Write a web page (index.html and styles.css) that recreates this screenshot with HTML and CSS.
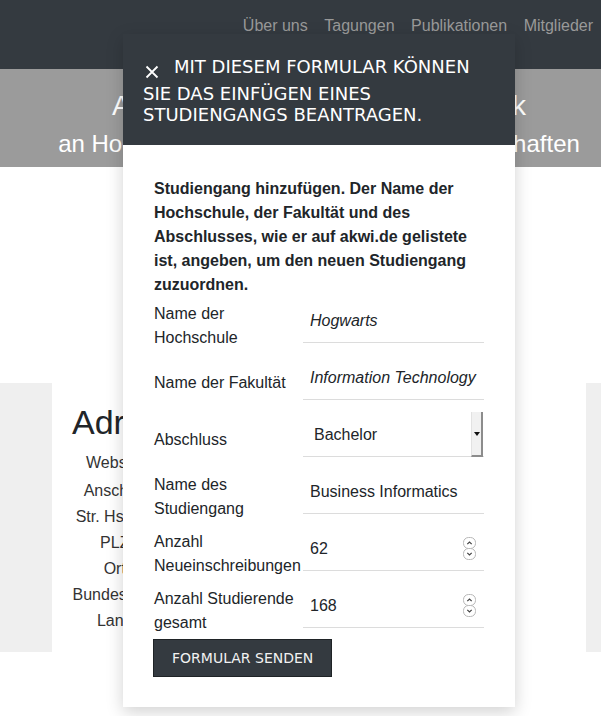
FILE: index.html
```html
<!DOCTYPE html>
<html lang="de">
<head>
<meta charset="utf-8">
<title>AKWI – Studiengang hinzufügen</title>
<link rel="stylesheet" href="styles.css">
</head>
<body>
<header class="navbar">
  <nav class="nav">
    <a href="#">Über uns</a>
    <a href="#">Tagungen</a>
    <a href="#">Publikationen</a>
    <a href="#">Mitglieder</a>
  </nav>
</header>
<section class="hero">
  <h1 class="hero-title">Arbeitskreis Wirtschaftsinformatik</h1>
  <p class="hero-sub">an Hochschulen für Angewandte Wissenschaften</p>
</section>
<div class="spacer"></div>
<section class="address-band">
  <div class="address-card">
    <h2 class="address-title">Adresse</h2>
    <dl class="address-list">
      <dt class="first">Website:</dt><dd class="first"></dd>
      <dt>Anschrift:</dt><dd></dd>
      <dt>Str. Hs.-Nr.:</dt><dd></dd>
      <dt>PLZ:</dt><dd></dd>
      <dt>Ort:</dt><dd></dd>
      <dt>Bundesland:</dt><dd></dd>
      <dt>Land:</dt><dd></dd>
    </dl>
  </div>
</section>

<div class="modal" role="dialog">
  <div class="modal-header">
    <h3 class="modal-title"><button class="close" type="button" aria-label="Schließen"><svg viewBox="0 0 14 14" width="14" height="14"><path d="M1.5 1.5 L12.5 12.5 M12.5 1.5 L1.5 12.5" stroke="#fff" stroke-width="1.8" fill="none"/></svg></button>Mit diesem Formular können Sie das Einfügen eines Studiengangs beantragen.</h3>
  </div>
  <div class="modal-body">
    <p class="intro">Studiengang hinzufügen. Der Name der Hochschule, der Fakultät und des Abschlusses, wie er auf akwi.de gelistete ist, angeben, um den neuen Studiengang zuzuordnen.</p>
    <form class="form-grid">
      <label for="hs">Name der Hochschule</label>
      <div class="field"><input id="hs" class="italic" type="text" value="Hogwarts"></div>

      <label for="fk">Name der Fakultät</label>
      <div class="field"><input id="fk" class="italic" type="text" value="Information Technology"></div>

      <label for="ab">Abschluss</label>
      <div class="field select-field">
        <select id="ab"><option>Bachelor</option><option>Master</option></select>
        <span class="select-btn"></span>
      </div>

      <label for="sg">Name des Studiengang</label>
      <div class="field"><input id="sg" type="text" value="Business Informatics"></div>

      <label for="ne">Anzahl Neueinschreibungen</label>
      <div class="field"><input id="ne" type="number" value="62">
        <svg class="spin" viewBox="0 0 15 23" width="15" height="23"><rect x="1.5" y="0.5" width="12" height="11" rx="5" fill="#fff" stroke="#b8b8b8"/><rect x="1.5" y="11.5" width="12" height="11" rx="5" fill="#fff" stroke="#b8b8b8"/><path d="M5.3 7.2 L7.5 5 L9.7 7.2" fill="none" stroke="#444" stroke-width="1.2"/><path d="M5.3 15.8 L7.5 18 L9.7 15.8" fill="none" stroke="#444" stroke-width="1.2"/></svg>
      </div>

      <label for="sd">Anzahl Studierende gesamt</label>
      <div class="field"><input id="sd" type="number" value="168">
        <svg class="spin" viewBox="0 0 15 23" width="15" height="23"><rect x="1.5" y="0.5" width="12" height="11" rx="5" fill="#fff" stroke="#b8b8b8"/><rect x="1.5" y="11.5" width="12" height="11" rx="5" fill="#fff" stroke="#b8b8b8"/><path d="M5.3 7.2 L7.5 5 L9.7 7.2" fill="none" stroke="#444" stroke-width="1.2"/><path d="M5.3 15.8 L7.5 18 L9.7 15.8" fill="none" stroke="#444" stroke-width="1.2"/></svg>
      </div>
    </form>
    <button class="submit" type="submit">Formular senden</button>
  </div>
</div>
</body>
</html>
```
FILE: styles.css
```css
* { box-sizing: border-box; }
html, body { margin: 0; padding: 0; }
body {
  font-family: "Liberation Sans", Arial, sans-serif;
  color: #212529;
  background: #fff;
  width: 601px;
  height: 716px;
  overflow: hidden;
  position: relative;
}

/* top navigation */
.navbar {
  background: #343a40;
  height: 69px;
  display: flex;
  justify-content: flex-end;
}
.nav { display: flex; padding-top: 14px; }
.nav a {
  color: #999;
  text-decoration: none;
  font-size: 16px;
  line-height: 24px;
  padding: 0 8px 0 8.5px;
}

/* hero band */
.hero {
  background: #9b9b9b;
  height: 98px;
  padding: 19px 0 0 37px;
  text-align: center;
  color: #fff;
}
.hero-title { margin: 0; font-size: 28px; line-height: 36px; font-weight: normal; }
.hero-sub { margin: 5px 0 0; font-size: 24px; line-height: 30px; }

.spacer { height: 216px; }

/* address section */
.address-band {
  background: #efefef;
  height: 269px;
  padding: 0 15px 0 52px;
  display: flex;
}
.address-card { background: #fff; flex: 1; padding: 19px 20px; }
.address-title {
  margin: 0 0 8px;
  font-size: 34px;
  line-height: 40px;
  font-weight: normal;
  color: #212529;
}
.address-list {
  display: grid;
  grid-template-columns: 90px 1fr;
  margin: 0;
  font-size: 16px;
  line-height: 26px;
  color: #333;
}
.address-list dt { text-align: center; }
.address-list dd { margin: 0; }
.address-list .first { padding-bottom: 2px; }

/* modal */
.modal {
  position: absolute;
  left: 123px;
  top: 34px;
  width: 392px;
  background: #fff;
  box-shadow: 0 5px 16px rgba(0, 0, 0, 0.18);
}
.modal-header {
  background: #343a40;
  color: #fff;
  padding: 22px 20px 20px;
}
.modal-title {
  margin: 0;
  font-family: "DejaVu Sans", sans-serif;
  font-size: 18px;
  line-height: 21px;
  font-weight: normal;
  text-transform: uppercase;
}
.close {
  display: inline-block;
  vertical-align: top;
  width: 15px;
  height: 27px;
  padding: 5px 0 0;
  margin: 0 14px 0 2px;
  border: 0;
  background: none;
  cursor: pointer;
}
.close svg { display: block; }

.modal-body { padding: 32px 31px 30px; }
.intro {
  margin: 0 0 2px;
  font-weight: bold;
  font-size: 16px;
  line-height: 24px;
  color: #212529;
}
.form-grid {
  display: grid;
  grid-template-columns: 149px 181px;
  grid-auto-rows: 52px;
  row-gap: 5px;
}
.form-grid label {
  align-self: center;
  padding-top: 2px;
  font-size: 16px;
  line-height: 24px;
  color: #212529;
}
.field { align-self: start; height: 44px; position: relative; }
.field input,
.field select {
  display: block;
  width: 100%;
  height: 44px;
  margin: 0;
  border: 0;
  border-bottom: 1px solid #dcdcdc;
  border-radius: 0;
  padding: 0 7px;
  font-family: "Liberation Sans", Arial, sans-serif;
  font-size: 16px;
  color: #212529;
  background: transparent;
  outline: none;
}
.field .italic { font-style: italic; }
.select-field select {
  -webkit-appearance: none;
  appearance: none;
  padding-left: 11px;
}
.select-btn {
  position: absolute;
  right: 1px;
  top: -1px;
  bottom: 0;
  width: 12px;
  background: #f1f1f1;
  border-left: 1px solid #e2e2e2;
  border-right: 2px solid #8c8c8c;
  border-bottom: 2px solid #8c8c8c;
  display: flex;
  align-items: center;
  justify-content: center;
  pointer-events: none;
}
.select-btn::after {
  content: "";
  border-left: 3px solid transparent;
  border-right: 3px solid transparent;
  border-top: 4px solid #111;
}
.field input[type=number] { -moz-appearance: textfield; appearance: textfield; }
.field input[type=number]::-webkit-inner-spin-button,
.field input[type=number]::-webkit-outer-spin-button { -webkit-appearance: none; margin: 0; }
.spin {
  position: absolute;
  right: 7px;
  top: 10px;
  pointer-events: none;
}

.submit {
  display: block;
  margin: 3px 0 0 -1px;
  background: #343a40;
  color: #f2f2f2;
  border: 1px solid #1f2326;
  font-family: "DejaVu Sans", sans-serif;
  font-size: 14px;
  line-height: 16px;
  padding: 10px 18px;
  text-transform: uppercase;
  cursor: pointer;
}
```
